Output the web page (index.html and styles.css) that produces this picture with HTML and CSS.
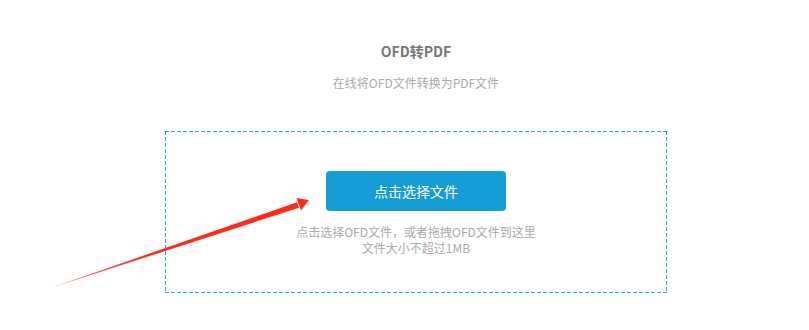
FILE: index.html
```html
<!DOCTYPE html>
<html lang="zh-CN">

<head>
    <meta charset="UTF-8">
    <meta name="viewport" content="width=device-width, initial-scale=1.0">
    <title>OFD转PDF</title>
    <link rel="stylesheet" href="styles.css">
</head>

<body>

    <div class="main">
        <div class="head">
            <h1 class="title">OFD转PDF</h1>
            <p class="sub">在线将OFD文件转换为PDF文件</p>
        </div>

        <div class="upload">
            <button class="btn">点击选择文件</button>
            <p class="tip">点击选择OFD文件，或者拖拽OFD文件到这里<br>文件大小不超过1MB</p>
        </div>
    </div>

    <!-- 指向按钮的箭头 -->
    <svg class="arrow" width="809" height="330" viewBox="0 0 809 330">
        <defs>
            <linearGradient id="fade" x1="47" y1="289" x2="300" y2="204" gradientUnits="userSpaceOnUse">
                <stop offset="0" stop-color="#ff2a1a" stop-opacity="0.1"></stop>
                <stop offset="0.12" stop-color="#ff2a1a" stop-opacity="0.7"></stop>
                <stop offset="0.4" stop-color="#ff2a1a"></stop>
                <stop offset="1" stop-color="#ff2a1a"></stop>
            </linearGradient>
        </defs>
        <polygon points="46,289.5 297,202.2 299,207.8" fill="url(#fade)"></polygon>
        <polygon points="309,200 296.5,198 301,210.5" fill="#ff2a1a"></polygon>
    </svg>

</body>

</html>
```

FILE: styles.css
```css
* {
    margin: 0;
    padding: 0;
}

body {
    background: #fff;
    font-family: "Microsoft YaHei", "Noto Sans CJK SC", sans-serif;
}

.main {
    width: 502px;
    margin-left: 165px;
}

.head {
    padding-top: 41px;
    text-align: center;
}

.title {
    font-size: 14px;
    line-height: 20px;
    font-weight: bold;
    color: #777;
}

.sub {
    margin-top: 13px;
    font-size: 12px;
    line-height: 18px;
    color: #aaa;
}

/* 虚线框：用渐变画 4px 实线 2px 间隔 */
.upload {
    margin-top: 39px;
    padding: 40px 0 37px;
    text-align: center;
    background-image:
        linear-gradient(to right, #1fadef 4px, transparent 4px),
        linear-gradient(to right, #1fadef 4px, transparent 4px),
        linear-gradient(to bottom, #1fadef 4px, transparent 4px),
        linear-gradient(to bottom, #1fadef 4px, transparent 4px);
    background-size: 6px 1px, 6px 1px, 1px 6px, 1px 6px;
    background-position: left top, left bottom, left top, right top;
    background-repeat: repeat-x, repeat-x, repeat-y, repeat-y;
}

.btn {
    width: 180px;
    height: 40px;
    border: none;
    border-radius: 4px;
    background: #159dd6;
    color: #fff;
    font-family: inherit;
    font-size: 14px;
    cursor: pointer;
}

.tip {
    margin-top: 13px;
    font-size: 12px;
    line-height: 16px;
    color: #aaa;
}

.arrow {
    position: absolute;
    left: 0;
    top: 0;
    pointer-events: none;
}
```
